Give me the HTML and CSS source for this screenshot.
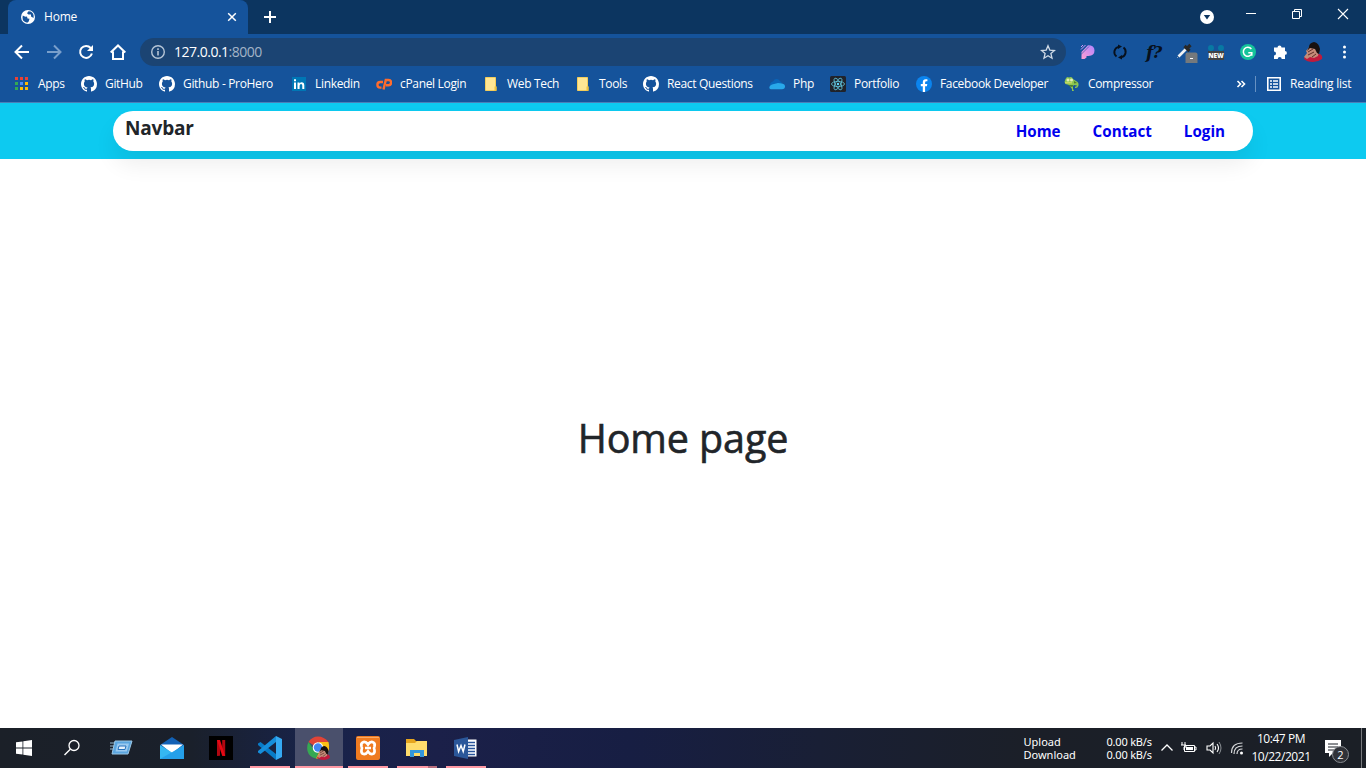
FILE: index.html
```html
<!DOCTYPE html>
<html lang="en">
<head>
<meta charset="utf-8">
<title>Home</title>
<link rel="stylesheet" href="styles.css">
</head>
<body>
<svg class="defs" width="0" height="0">
  <symbol id="github" viewBox="0 0 16 16"><path fill="#fff" fill-rule="evenodd" d="M8 0C3.58 0 0 3.58 0 8c0 3.54 2.29 6.53 5.47 7.59.4.07.55-.17.55-.38 0-.19-.01-.82-.01-1.49-2.01.37-2.53-.49-2.69-.94-.09-.23-.48-.94-.82-1.13-.28-.15-.68-.52-.01-.53.63-.01 1.08.58 1.23.82.72 1.21 1.87.87 2.33.66.07-.52.28-.87.51-1.07-1.78-.2-3.64-.89-3.64-3.95 0-.87.31-1.59.82-2.15-.08-.2-.36-1.02.08-2.12 0 0 .67-.21 2.2.82a7.6 7.6 0 0 1 4 0c1.53-1.04 2.2-.82 2.2-.82.44 1.1.16 1.92.08 2.12.51.56.82 1.27.82 2.15 0 3.07-1.87 3.75-3.65 3.95.29.25.54.73.54 1.48 0 1.07-.01 1.93-.01 2.2 0 .21.15.46.55.38A8 8 0 0 0 16 8c0-4.42-3.58-8-8-8z"/></symbol>
  <symbol id="folder" viewBox="0 0 16 16"><path fill="#ffe694" stroke="#f3cd5c" d="M2.500 1.500h10v9h.5v4H2.500z"/><path fill="#efc23f" d="M11.500 10.500H13.500V15h-2z"/></symbol>
  <symbol id="person" viewBox="0 0 20 20"><path fill="#c01a3c" d="M1 17q0-3 4-3l5-1 7-1q3 2 2 5-4 3-9 3-6 0-9-3z"/><path fill="#c48b78" d="M3 9l4-5 5-1 4 6-1 5-4 2-4-1-3 2-3-2 3-4z"/><path fill="#17100f" d="M6 5q0-4 5-5 5 1 6 7l-1 5-2-1-2-4-5-1-3 3z"/><path d="M5 10l5-3M5 13l6-3M9 15l4-3" stroke="#5e2f28"/></symbol>
</svg>

<header class="browser">
  <div class="tabstrip">
    <div class="tab">
      <svg width="16" height="16" viewBox="0 0 16 16"><circle cx="8" cy="8" r="7" fill="#fff"/><path fill="#15539b" d="M2.800 6.500Q4.500 8 7 7.500l.500 2 2 .300-.800 2.700-1.500 1.200Q2.500 13 2.500 8.500zM8.500 2.300l-1.500 2 1.500 1.300H11v2l2.600 1.300Q14.200 4 10.500 2.600z"/></svg>
      <span class="tab-title">Home</span>
      <svg class="tab-close" width="16" height="16" viewBox="0 0 16 16"><path d="M4.200 4.200l7.600 7.600M11.800 4.200l-7.600 7.600" stroke="#fff" stroke-width="1.500"/></svg>
    </div>
    <svg class="tab-add" width="14" height="14" viewBox="0 0 14 14"><path d="M7 1v12M1 7h12" stroke="#fff" stroke-width="2"/></svg>
    <div class="window-controls">
      <svg width="16" height="16" viewBox="0 0 16 16"><circle cx="8" cy="8" r="7" fill="#fff"/><path fill="#0c3560" d="M4.800 6h6.400L8 10.500z"/></svg>
      <svg width="12" height="12" viewBox="0 0 12 12"><path d="M1 5.500h10" stroke="#fff"/></svg>
      <svg width="12" height="12" viewBox="0 0 12 12"><path d="M1.500 3.500h7v7h-7zM3.500 3.500v-2h7v7h-2" fill="none" stroke="#fff"/></svg>
      <svg width="12" height="12" viewBox="0 0 12 12"><path d="M1 1l10 10M11 1L1 11" stroke="#fff" stroke-width="1.100"/></svg>
    </div>
  </div>

  <div class="toolbar">
    <div class="nav-buttons">
      <svg width="16" height="16" viewBox="0 0 16 16"><path d="M15 8H2M8 1.500L1.500 8 8 14.500" fill="none" stroke="#fff" stroke-width="2"/></svg>
      <svg width="16" height="16" viewBox="0 0 16 16"><path d="M1 8h13M8 1.500L14.500 8 8 14.500" fill="none" stroke="#799fcb" stroke-width="2"/></svg>
      <svg width="16" height="16" viewBox="0 0 16 16"><path d="M13.900 9.500A6 6 0 1 1 12.700 4" fill="none" stroke="#fff" stroke-width="2"/><path d="M15 1v6H9z" fill="#fff"/></svg>
      <svg width="18" height="18" viewBox="0 0 18 18"><path d="M1.700 9.500L9 2.500l7.300 7M4 8.500V16h10V8.500" fill="none" stroke="#fff" stroke-width="2"/></svg>
    </div>
    <div class="address">
      <svg width="16" height="16" viewBox="0 0 16 16"><circle cx="8" cy="8" r="6.300" fill="none" stroke="#b6c5d6" stroke-width="1.400"/><path d="M8 7v4.500M8 4.300V6" stroke="#b6c5d6" stroke-width="1.600"/></svg>
      <span class="url">127.0.0.1<span class="port">:8000</span></span>
      <svg class="star" width="16" height="16" viewBox="0 0 16 16"><path d="M8 1.800l1.800 4.300 4.700.4-3.600 3 1.100 4.700-4-2.500-4 2.500 1.100-4.700-3.600-3 4.700-.4z" fill="none" stroke="#d0dae6" stroke-width="1.300"/></svg>
    </div>
    <div class="extensions">
      <svg width="16" height="16" viewBox="0 0 16 16"><defs><linearGradient id="pp" x1="0" x2="1" y1="1" y2="0"><stop stop-color="#ff9ed2"/><stop offset="1" stop-color="#b184ff"/></linearGradient></defs><path fill="url(#pp)" d="M1.500 8L8 1.200q6.500 0 6.500 5.300t-6 5.500H6.500v1.500L4.500 15h-3z"/><path d="M1 3l2-2M1 5.500L5.500 1" stroke="#d694f5"/><path d="M1 10.500L9 2.500" stroke="#15539b" stroke-width=".6"/></svg>
      <svg width="16" height="16" viewBox="0 0 16 16"><path d="M4.500 12.500A5.500 5.500 0 0 1 6.500 2.800M11.500 3.500A5.500 5.500 0 0 1 9.500 13.200" fill="none" stroke="#07101c" stroke-width="1.900"/><path d="M6 .500l4 2L6 5zM10 11l-4 2.500 4 2z" fill="#07101c"/></svg>
      <span class="font-ext">f?</span>
      <svg width="22" height="22" viewBox="0 0 22 22"><path d="M2.500 15.500L10 8" stroke="#f0f2f4" stroke-width="2.600"/><path d="M1 17l2-2" stroke="#8da2b8"/><path d="M8.500 5l5 5M11 7.500L14.500 4" stroke="#292929" stroke-width="3.200"/><rect x="9.500" y="11.500" width="12" height="12" rx="2" fill="#75797c"/><path d="M14 17.500h3" stroke="#fff"/></svg>
      <span class="new-ext">NEW</span>
      <svg width="18" height="18" viewBox="0 0 18 18"><circle cx="9" cy="9" r="8" fill="#15c39a"/><path d="M12.400 6A4.500 4.500 0 1 0 13 10.500M9.300 9.800h3.500v3" fill="none" stroke="#fff" stroke-width="1.500"/></svg>
      <svg width="16" height="16" viewBox="0 0 16 16"><path fill="#fff" d="M2 3.500h3.500a2 2 0 1 1 4 0h3.500V7a1.900 1.900 0 1 1 0 3.800V15H9.700a2 2 0 1 0-4 0H2v-3.600a2 2 0 1 0 0-4z"/></svg>
      <svg width="20" height="20"><use href="#person"/></svg>
      <svg width="16" height="16" viewBox="0 0 16 16"><g fill="#fff"><circle cx="8.500" cy="3" r="1.500"/><circle cx="8.500" cy="8" r="1.500"/><circle cx="8.500" cy="13" r="1.500"/></g></svg>
    </div>
  </div>

  <div class="bookmarks">
    <div class="bookmark"><svg width="16" height="16" viewBox="0 0 16 16"><g fill="#ea4335"><path d="M1 1h3v3H1zM6 1h3v3H6zM11 1h3v3h-3z"/></g><path fill="#34a853" d="M1 6h3v3H1zM1 11h3v3H1z"/><path fill="#4c8df6" d="M6 6h3v3H6z"/><path fill="#fbbc05" d="M11 6h3v3h-3zM6 11h3v3H6zM11 11h3v3h-3z"/></svg><span>Apps</span></div>
    <div class="bookmark"><svg width="16" height="16"><use href="#github"/></svg><span>GitHub</span></div>
    <div class="bookmark"><svg width="16" height="16"><use href="#github"/></svg><span>Github - ProHero</span></div>
    <div class="bookmark"><svg width="16" height="16" viewBox="0 0 16 16"><path fill="#0077b5" d="M1 1h14v14H1z"/><path fill="#fff" d="M3 6.500h2V13H3zM3 3.300h2v2H3zM6.500 6.500h2v1q1-1.300 2.500-1.200 2.300.2 2.300 2.800V13h-2V9.500q0-1.500-1.200-1.500-1.500 0-1.500 1.700V13H6.500z"/></svg><span>Linkedin</span></div>
    <div class="bookmark"><svg width="16" height="16" viewBox="0 0 16 16"><path d="M7 6H4.200a2.800 2.800 0 0 0 0 5.600H5.500M7.500 13.500L9.800 4H12.500a2.200 2.200 0 0 1 0 5.200H10" fill="none" stroke="#ff6c2c" stroke-width="2.400"/></svg><span>cPanel Login</span></div>
    <div class="bookmark"><svg width="16" height="16"><use href="#folder"/></svg><span>Web Tech</span></div>
    <div class="bookmark"><svg width="16" height="16"><use href="#folder"/></svg><span>Tools</span></div>
    <div class="bookmark"><svg width="16" height="16"><use href="#github"/></svg><span>React Questions</span></div>
    <div class="bookmark"><svg width="16" height="16" viewBox="0 0 16 16"><path fill="#0a64b8" d="M1 9q0-3 3-3.500Q6 2 9.500 3.500L13 7l-9 5z"/><path fill="#28a8ea" d="M1 13q-2-3 2-4.500L9 7l4 .500q3 .500 3 3t-3 2.800H3q-1 0-2-.300z"/></svg><span>Php</span></div>
    <div class="bookmark"><svg width="16" height="16" viewBox="0 0 16 16"><rect width="16" height="16" rx="1.500" fill="#20232a"/><g fill="none" stroke="#61c5dc" stroke-width=".8"><ellipse cx="8" cy="8" rx="6.500" ry="2.600"/><ellipse cx="8" cy="8" rx="6.500" ry="2.600" transform="rotate(60 8 8)"/><ellipse cx="8" cy="8" rx="6.500" ry="2.600" transform="rotate(120 8 8)"/></g><circle cx="8" cy="8" r="1.200" fill="#61dafb"/></svg><span>Portfolio</span></div>
    <div class="bookmark"><svg width="16" height="16" viewBox="0 0 16 16"><circle cx="8" cy="8" r="8" fill="#0b84ee"/><path fill="#fff" d="M6.800 16v-5.700h-2V8h2V6.200q0-3 2.900-3l1.700.1v2h-1q-1.300 0-1.300 1.200V8h2.200l-.4 2.300H9.100V16z"/></svg><span>Facebook Developer</span></div>
    <div class="bookmark"><svg width="16" height="16" viewBox="0 0 16 16"><path fill="#8dc653" d="M1.500 3q1.500-3 3.500-1.500Q8 0 9 3l3 2q3 1 2.500 4.500-1 3-3.500 2.500v-1.500q1.500.5 2-1L10 9l-1 1v3l1 2H8v-2L5 9 1.500 8 .500 6z"/><path fill="#4c7c31" d="M4 9h5v1.500L7 11zM10 5l3 2-3 .500z"/><circle cx="4" cy="4" r="1.500" fill="#e4efb8"/><circle cx="7.500" cy="4" r="1.500" fill="#e4efb8"/><path d="M1 6.800h7" stroke="#dcdf6a"/></svg><span>Compressor</span></div>
    <svg class="more" width="10" height="10" viewBox="0 0 10 10"><path d="M1.500 2l3 3-3 3M5.500 2l3 3-3 3" fill="none" stroke="#fff" stroke-width="1.600"/></svg>
    <div class="reading"><svg width="16" height="16" viewBox="0 0 16 16"><path d="M1.800 1.800h12.400v12.400H1.800z" fill="none" stroke="#fff" stroke-width="1.600"/><path d="M4 5h2M4 8h2M4 11h2M7 5h5M7 8h5M7 11h5" stroke="#fff" stroke-width="1.500"/></svg><span>Reading list</span></div>
  </div>
</header>

<main class="page">
  <nav class="navbar">
    <div class="nav-container">
      <span class="brand">Navbar</span>
      <div class="nav-links"><a href="#">Home</a><a href="#">Contact</a><a href="#">Login</a></div>
    </div>
  </nav>
  <section class="content"><h1>Home page</h1></section>
</main>

<footer class="taskbar">
  <div class="task start"><svg width="16" height="16" viewBox="0 0 16 16"><path fill="#fff" d="M0 2.300l6.500-.9v6.200H0zM7.300 1.300L16 0v7.600H7.300zM0 8.400h6.500v6.200L0 13.700zM7.300 8.400H16V16l-8.700-1.300z"/></svg></div>
  <div class="task search"><svg width="18" height="18" viewBox="0 0 18 18"><circle cx="11" cy="6.500" r="5" fill="none" stroke="#fff" stroke-width="1.300"/><path d="M7.300 10.200L1.500 16" stroke="#fff" stroke-width="1.400"/></svg></div>
  <div class="task run"><svg width="24" height="18" viewBox="0 0 24 18"><path d="M1 4h7M1 7h5M1 10h4" stroke="#6d8799" stroke-width="1.500"/><path d="M6 2h17l-4 13H3z" fill="#5aa5df" stroke="#9bc7e5"/><path d="M8.500 4.500H20l-2.200 8H6.500z" fill="#9bcaf0"/><path d="M10 7h7l-1 3.500H9z" fill="#e6f1fb" stroke="#2672bd"/></svg></div>
  <div class="task"><svg width="24" height="24" viewBox="0 0 24 24"><path fill="#1261b5" d="M0 9l12-8 12 8-12 9z"/><path fill="#fff" d="M1 8.500h22l-11 9z"/><path fill="#35b7f1" d="M0 9l12 7.500L24 9v14H0z"/><path fill="#1b91e5" d="M0 23l14-8L24 9v14z" opacity=".6"/></svg></div>
  <div class="task"><svg width="24" height="24" viewBox="0 0 24 24"><path d="M0 0h24v24H0z"/><path fill="#b20710" d="M8 4h3v15.700L8 20zM13.200 4h3v16l-3-.3z"/><path fill="#e50914" d="M8 4h3l5.200 16-3-.3z"/></svg></div>
  <div class="task open"><svg width="24" height="24" viewBox="0 0 24 24"><path fill="#087bc7" d="M0 7.500L2.500 6 18 18v6L0 9z"/><path fill="#168edb" d="M0 16.500L2.500 18 18 6V0L0 15z"/><path fill="#35a9f2" d="M18 0l6 3v18l-6 3z"/></svg></div>
  <div class="task open active"><svg width="24" height="24" viewBox="0 0 24 24"><path fill="#e04437" d="M11 12L1.500 6Q5 .500 11 .500T21.500 6H11z"/><path fill="#36a853" d="M1.500 6L7 14l5 2-3 6.500Q2 21 .500 15-.500 10 1.500 6z"/><path fill="#fbc116" d="M12 6h9.500q2 7-2 12-4 5-10.500 4.500l4-8z"/><circle cx="11" cy="11.500" r="5.300" fill="#fff"/><circle cx="11" cy="11.500" r="4.200" fill="#4386f2"/><use href="#person" x="9.500" y="10" width="14" height="14"/></svg></div>
  <div class="task open xampp"><svg width="24" height="24" viewBox="0 0 24 24"><rect width="24" height="24" rx="2" fill="#ef7b20"/><path d="M1 1.500h22" stroke="#f8aa66"/><path d="M12 8.500Q10 5.500 7.500 6 4.500 7 5.500 10.500q1 1.500 0 3.500-.5 3.500 2 4 2.500.5 4.500-2.500 2 3 4.500 2.500 2.500-.5 2-4-1-2 0-3.500 1-3.500-2-4.500-2.500-.5-4.500 2.500z" fill="none" stroke="#fff" stroke-width="2.700"/><path d="M9 12h6" stroke="#fff" stroke-width="2.500"/></svg></div>
  <div class="task open folder"><svg width="24" height="24" viewBox="0 0 24 24"><path fill="#e6a51e" d="M1 3h8l2 2h11v6H1z"/><path fill="#ffdc6c" d="M1 7h9l2-2h10v15H1z"/><path fill="#3597dc" d="M5 14h14v7h-4v-4H9v4H5z"/></svg></div>
  <div class="task open"><svg width="24" height="24" viewBox="0 0 24 24"><path fill="#fff" d="M12 3.500h10.500v17H12z"/><path d="M14 6.500h7M14 9.500h7M14 12.500h7M14 15.500h7M14 18.500h7" stroke="#29549a" stroke-width="1.300"/><path fill="#2b579a" d="M0 4l14-3v22L0 20z"/><path d="M3 8.500l1.600 7L7 9.500l2.200 6 1.800-7" fill="none" stroke="#fff" stroke-width="1.500"/></svg></div>
  <div class="network"><span>Upload</span><span class="rate">0.00 kB/s</span><span>Download</span><span class="rate">0.00 kB/s</span></div>
  <div class="tray">
    <svg width="12" height="12" viewBox="0 0 12 12"><path d="M.5 8.500L6 3l5.500 5.500" fill="none" stroke="#fff" stroke-width="1.300"/></svg>
    <svg width="18" height="14" viewBox="0 0 18 14"><path d="M4.500 4.500h10v6h-10zM15 6h1v3h-1M2 1v3M5 1v3M1 4h5v2H4v3" fill="none" stroke="#fff"/><path fill="#fff" d="M6 6h7v3H6z"/></svg>
    <svg width="17" height="16" viewBox="0 0 17 16"><path d="M1 6h3l3-3v10l-3-3H1zM9 6q1.300 2 0 4M11 4q3 4 0 8" fill="none" stroke="#fff" stroke-width="1.100"/><path d="M13 2q4 6 0 12" fill="none" stroke="#8b9095"/></svg>
    <svg width="14" height="14" viewBox="0 0 14 14"><path d="M1.500 12Q1.500 2 12.500 2M4 13Q4 5 12.500 5M7 13Q7 8 12.500 8" fill="none" stroke="#d7d9db" stroke-width="1.200"/><circle cx="11.500" cy="12" r="1.500" fill="#fff"/></svg>
  </div>
  <div class="clock"><span>10:47 PM</span><span>10/22/2021</span></div>
  <div class="notice"><svg width="17" height="17" viewBox="0 0 17 17"><path fill="#fff" d="M0 0h16v13H8l-4 4v-4H0z"/><path d="M3 4h10M3 7h10M3 10h6" stroke="#1b1f26"/></svg><span>2</span></div>
</footer>
</body>
</html>
```
FILE: styles.css
```css
* { box-sizing: border-box; }
body { margin: 0; width: 1366px; height: 768px; overflow: hidden; display: flex; flex-direction: column; font-family: "Open Sans", "Noto Sans", sans-serif; background: #fff; }
svg { display: block; flex: none; }
.defs { position: absolute; }
.browser { height: 103px; background: #15539b; border-bottom: 1px solid #4a7fb8; color: #fff; }
.tabstrip { height: 34px; display: flex; align-items: center; background: #0c3560; padding-left: 8px; }
.tab { width: 240px; height: 34px; display: flex; align-items: center; padding: 0 8px 0 12px; background: #15539b; border-radius: 8px 8px 0 0; }
.tab-title { margin-left: 8px; padding-bottom: 1px; font-size: 12px; letter-spacing: -.2px; }
.tab-close { margin-left: auto; }
.tab-add { margin-left: 15px; }
.window-controls { margin-left: auto; width: 167px; padding-bottom: 6px; display: grid; grid-template-columns: 46px 46px 46px 29px; align-items: center; }
.window-controls svg:first-child { margin-top: 5px; }
.toolbar { height: 36px; display: flex; align-items: center; }
.nav-buttons { width: 140px; padding-left: 14px; display: grid; grid-template-columns: 32px 32px 31px 18px; align-items: center; }
.address { width: 926px; height: 28px; border-radius: 14px; background: #1b4473; padding: 0 10px; display: flex; align-items: center; }
.url { margin-left: 8px; padding-bottom: 1px; font-size: 14px; letter-spacing: -.5px; }
.port { color: #a4b4c7; }
.star { margin-left: auto; }
.extensions { flex: 1; padding-left: 14px; display: grid; grid-template-columns: 32px 32px 32px 32px 31px 33px 31px 33px 16px; align-items: center; }
.font-ext { padding-left: 2px; font: italic bold 17px/18px "DejaVu Serif", "Liberation Serif", serif; letter-spacing: -1px; color: #07101c; }
.new-ext { width: 16px; height: 15px; margin-top: 1px; border-top: 6px dotted #0879a3; background: #414346 padding-box; font-size: 6.500px; line-height: 9px; font-weight: 800; text-align: center; }
.bookmarks { height: 28px; padding: 0 14px; display: grid; grid-template-columns: 67px 78px 132px 85px 107px 92px 68px 126px 61px 86px 148px 172px 19px 1fr; align-items: center; font-size: 12px; }
.bookmark, .reading { display: flex; align-items: center; gap: 8px; white-space: nowrap; letter-spacing: -.33px; }
.bookmark span, .reading span { padding-bottom: 2px; }
.reading { border-left: 1px solid #6791c2; padding-left: 10px; height: 16px; letter-spacing: -.25px; }
.page { height: 625px; display: flex; flex-direction: column; }
.navbar { height: 56px; padding: 8px 113px; background: #0dcaf0; }
.nav-container { height: 40px; padding: 0 28px 0 12px; display: flex; justify-content: space-between; background: #fff; border-radius: 20px; box-shadow: 0 14px 22px rgba(0,0,0,.065); }
.brand { font-size: 19px; line-height: 34px; font-weight: 700; letter-spacing: -.2px; color: #212529; }
.nav-links { display: flex; gap: 32px; line-height: 40px; font-size: 15.200px; font-weight: 700; }
.nav-links a { color: #00e; text-decoration: none; }
.content { flex: 1; display: flex; justify-content: center; align-items: center; }
h1 { margin: 0; padding-bottom: 12px; font-size: 39.500px; line-height: 48px; font-weight: 500; letter-spacing: -.1px; -webkit-text-stroke: .6px #212529; color: #212529; }
.taskbar { height: 40px; display: flex; color: #fff; background: linear-gradient(90deg, #1b2028 0, #1a202b 14%, #18234a 23%, #1b2049 32%, #171e43 46%, #191f35 60%, #1b1f28 75%, #1b1f26); }
.task { width: 49px; display: flex; align-items: center; justify-content: center; position: relative; }
.start, .search { width: 48px; }
.run { width: 51px; padding-right: 1px; }
.open::after { content: ""; position: absolute; bottom: 0; left: 4px; width: 40px; height: 2px; background: #ff99a4; }
.task.open { left: 1px; }
.task.open svg { margin-left: -1px; }
.active { background: #4a506c; width: 48px; }
.active::after { left: 0; width: 48px; }
.xampp { width: 50px; }
.xampp::after { left: 5px; }
.folder::after { background: linear-gradient(90deg, #ff99a4 78%, #b96f7e 78%); }
.network { margin-left: auto; width: 132px; display: grid; grid-template-columns: 83px 49px; align-content: center; font: 11px/13px "Noto Sans", sans-serif; white-space: nowrap; }
.network .rate { letter-spacing: -.2px; }
.tray { margin-left: 5px; margin-right: 2px; display: flex; align-items: center; gap: 7.500px; }
.clock { width: 70px; display: flex; flex-direction: column; align-items: center; justify-content: center; font-size: 12px; line-height: 18px; letter-spacing: -.45px; white-space: nowrap; }
.notice { width: 46px; padding: 12px 0 0 9px; position: relative; border-right: 1px solid #77797d; margin-right: 4px; }
.notice span { position: absolute; left: 16px; top: 18px; width: 17px; height: 17px; border: 1px solid #888c91; border-radius: 50%; background: #303238; font-size: 11px; line-height: 15px; text-align: center; }
```
